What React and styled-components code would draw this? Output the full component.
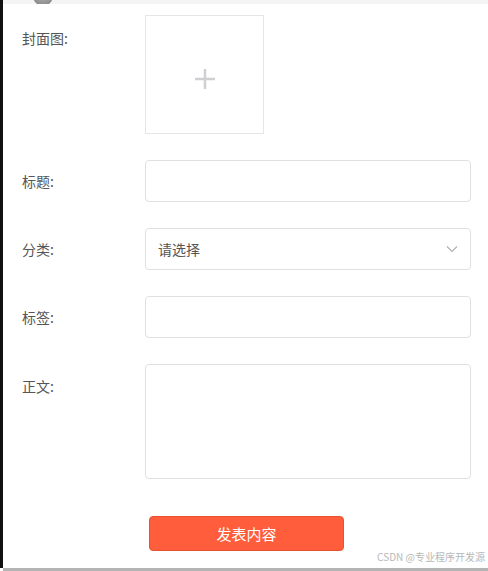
import React from 'react'
import styled, { createGlobalStyle } from 'styled-components'

const GlobalStyle = createGlobalStyle`
    html, body {
        margin: 0;
        padding: 0;
        background: #ffffff;
    }
    body {
        font-family: "Noto Sans CJK SC", "Noto Sans", sans-serif;
        width: 488px;
        height: 571px;
        overflow: hidden;
    }
`

const Page = styled.div`
    width: 488px;
    height: 571px;
    display: flex;
    flex-direction: column;
    overflow: hidden;
`

const Frame = styled.div`
    flex: 1;
    display: flex;
    min-height: 0;
`

const SideBar = styled.div`
    width: 3px;
    background: #111;
    flex-shrink: 0;
`

const Main = styled.div`
    flex: 1;
    display: flex;
    flex-direction: column;
    position: relative;
`

const TopStrip = styled.div`
    height: 4px;
    background: #f4f4f4;
    position: relative;
    overflow: hidden;
`

const Avatar = styled.div`
    position: absolute;
    left: 30px;
    top: -14px;
    width: 20px;
    height: 20px;
    border-radius: 50%;
    background: radial-gradient(circle at 50% 40%, #b8b8b8, #7a7a7a);
`

const Form = styled.div`
    display: flex;
    flex-direction: column;
    gap: 26px;
    padding: 11px 17px 0 19px;
`

const Row = styled.div`
    display: flex;
    align-items: flex-start;
`

const Label = styled.label`
    width: 123px;
    flex-shrink: 0;
    font-size: 14px;
    line-height: ${({ $lh }) => $lh || 42}px;
    color: #555;
`

const Upload = styled.div`
    width: 119px;
    height: 119px;
    box-sizing: border-box;
    border: 1px solid #e6e6e6;
    display: flex;
    align-items: center;
    justify-content: center;
    padding-top: 8px;
`

const Field = styled.div`
    flex: 1;
    height: ${({ $h }) => $h || 42}px;
    box-sizing: border-box;
    border: 1px solid #e0e0e0;
    border-radius: 4px;
    background: #fff;
    display: flex;
    align-items: center;
    justify-content: space-between;
    padding: 0 12px;
`

const Placeholder = styled.span`
    font-size: 14px;
    color: #555;
`

const Footer = styled.div`
    display: flex;
    padding: 37px 0 0 146px;
`

const Submit = styled.button`
    width: 195px;
    height: 35px;
    box-sizing: border-box;
    border: 1px solid #e4552f;
    border-radius: 4px;
    background: #ff5d3b;
    color: #fff;
    font-family: "Noto Sans CJK SC", sans-serif;
    font-size: 15px;
    padding: 0;
`

const Watermark = styled.span`
    position: absolute;
    right: 3px;
    bottom: 4px;
    font-size: 10px;
    color: #b8b8b8;
    font-family: "Noto Sans CJK SC", "Liberation Sans", sans-serif;
`

const BottomLine = styled.div`
    height: 3px;
    margin-left: 3px;
    background: #b4b4b4;
    flex-shrink: 0;
`

const Plus = () => (
    <svg width="22" height="22" viewBox="0 0 22 22">
        <path d="M11 1v20M1 11h20" stroke="#cfcfd4" strokeWidth="2.6" />
    </svg>
)

const Chevron = () => (
    <svg width="12" height="8" viewBox="0 0 12 8">
        <path d="M1 1.5l5 5 5-5" fill="none" stroke="#b0b0b0" strokeWidth="1.2" />
    </svg>
)

export default function App() {
    return (
        <Page>
            <GlobalStyle />
            <Frame>
                <SideBar />
                <Main>
                    <TopStrip>
                        <Avatar />
                    </TopStrip>
                    <Form>
                        <Row>
                            <Label $lh={46}>封面图:</Label>
                            <Upload>
                                <Plus />
                            </Upload>
                        </Row>
                        <Row>
                            <Label>标题:</Label>
                            <Field />
                        </Row>
                        <Row>
                            <Label>分类:</Label>
                            <Field>
                                <Placeholder>请选择</Placeholder>
                                <Chevron />
                            </Field>
                        </Row>
                        <Row>
                            <Label>标签:</Label>
                            <Field />
                        </Row>
                        <Row>
                            <Label $lh={44}>正文:</Label>
                            <Field $h={115} />
                        </Row>
                    </Form>
                    <Footer>
                        <Submit>发表内容</Submit>
                    </Footer>
                    <Watermark>CSDN @专业程序开发源</Watermark>
                </Main>
            </Frame>
            <BottomLine />
        </Page>
    )
}
